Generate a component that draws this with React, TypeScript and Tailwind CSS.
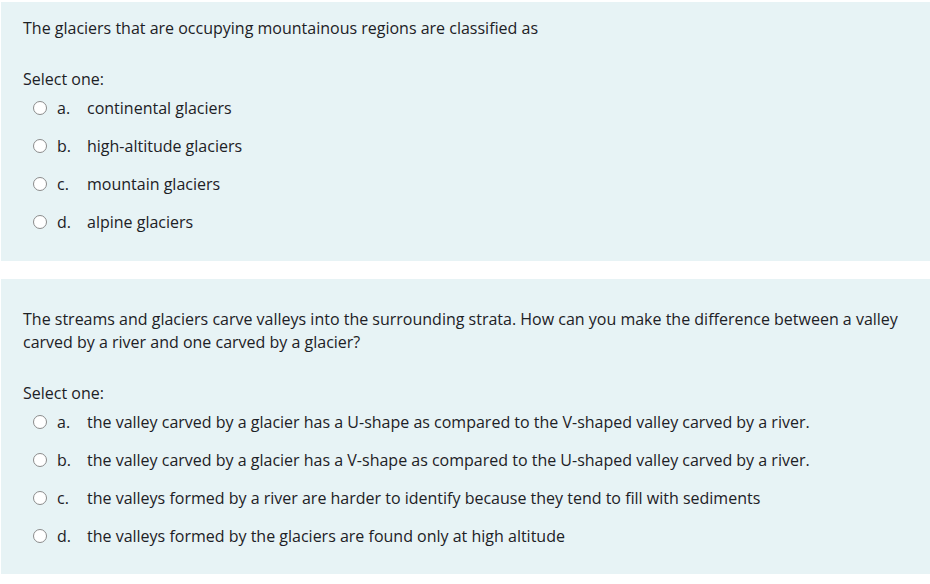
import React from "react";

interface Question {
  lines: string[];
  options: string[];
}

const QUESTIONS: Question[] = [
  {
    lines: ["The glaciers that are occupying mountainous regions are classified as"],
    options: ["continental glaciers", "high-altitude glaciers", "mountain glaciers", "alpine glaciers"],
  },
  {
    lines: [
      "The streams and glaciers carve valleys into the surrounding strata. How can you make the difference between a valley",
      "carved by a river and one carved by a glacier?",
    ],
    options: [
      "the valley carved by a glacier has a U-shape as compared to the V-shaped valley carved by a river.",
      "the valley carved by a glacier has a V-shape as compared to the U-shaped valley carved by a river.",
      "the valleys formed by a river are harder to identify because they tend to fill with sediments",
      "the valleys formed by the glaciers are found only at high altitude",
    ],
  },
];

const LETTERS = ["a.", "b.", "c.", "d."];

function QuestionPanel({ q, pad }: { q: Question; pad: string }) {
  return (
    <div className={`bg-[#e7f3f5] pl-[22px] pr-4 ${pad}`}>
      {/* question text */}
      <div>
        {q.lines.map((l) => (
          <p key={l} className="leading-[23px]">{l}</p>
        ))}
      </div>
      <p className="mt-[28px] leading-[23px]">Select one:</p>
      <div className="-mt-[2px] flex flex-col">
        {q.options.map((o, i) => (
          <label key={o} className="flex h-[38px] items-center">
            <span className="ml-[10px] h-[14px] w-[14px] shrink-0 rounded-full border border-[#8b8b8b] bg-white" />
            <span className="ml-[10px] w-[30px]">{LETTERS[i]}</span>
            <span>{o}</span>
          </label>
        ))}
      </div>
    </div>
  );
}

export default function App() {
  return (
    <div
      className="min-h-[584px] bg-white pt-[2px] pl-[1px] text-[16px] text-[#1d2125]"
      style={{ fontFamily: '"Segoe UI", "Open Sans", "Noto Sans", sans-serif' }}
    >
      <QuestionPanel q={QUESTIONS[0]} pad="pt-[15px] pb-[20px]" />
      <div className="h-[18px]" />
      <QuestionPanel q={QUESTIONS[1]} pad="pt-[29px] pb-[19px]" />
    </div>
  );
}
